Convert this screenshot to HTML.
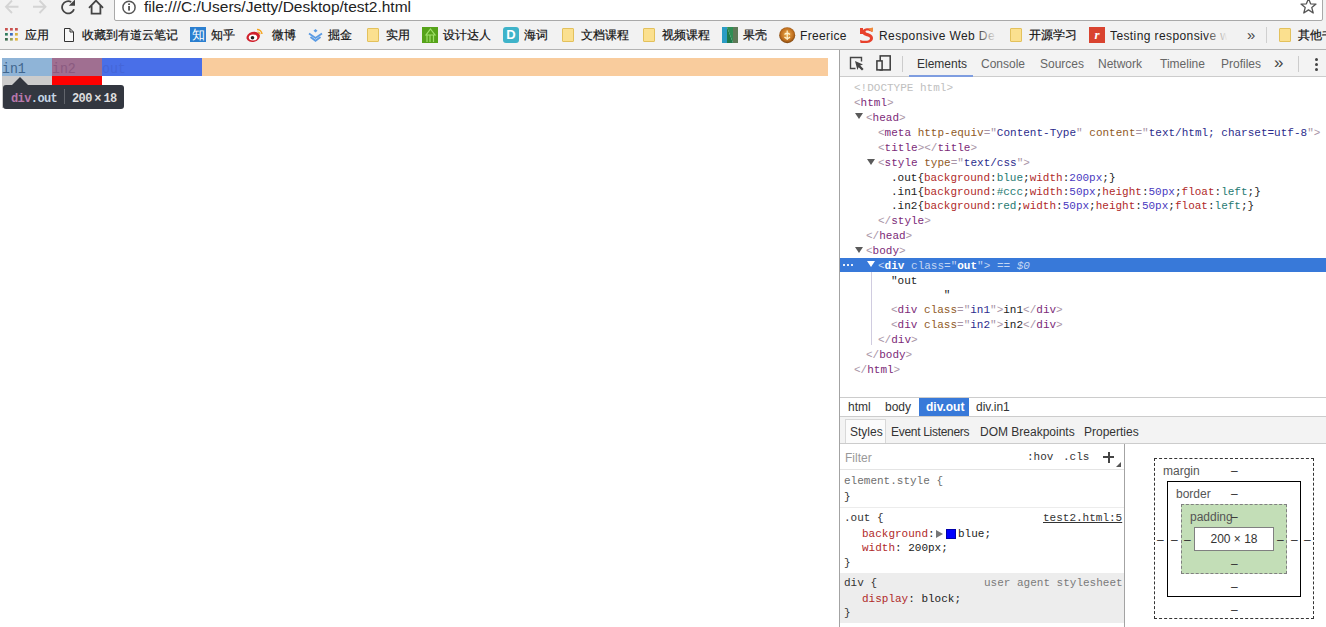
<!DOCTYPE html>
<html><head><meta charset="utf-8">
<style>
*{box-sizing:border-box}
html,body{margin:0;padding:0}
body{width:1326px;height:627px;position:relative;overflow:hidden;background:#fff;font-family:"Liberation Sans",sans-serif;font-size:12px;color:#222}
.a{position:absolute}
.t{position:absolute;white-space:pre;line-height:14px}
.m{font-family:"Liberation Mono",monospace;font-size:11px}
/* elements colors */
.tg{color:#7c2a78}.br{color:#a894a6}.an{color:#8f5a26}.av{color:#2c2c8c}
.bm{font-size:12px;line-height:14px;color:#111;-webkit-text-stroke:0.2px #111}
.fold{top:28px;width:12px;height:14px;background:#fbe08f;border:1px solid #e3c15c;border-radius:1px}
.pg{top:61px;font:15px/18px "Liberation Mono",monospace;transform:scaleX(0.88);transform-origin:0 0}
.cp{color:#b02a2a}.ca{color:#1f7a72}.cn{color:#4a3ac0}
</style></head><body>


<!-- ===== top toolbar ===== -->
<div class="a" style="left:0;top:0;width:1326px;height:49px;background:#f2f2f2"></div>
<!-- nav icons -->
<svg class="a" style="left:0;top:0" width="115" height="20" viewBox="0 0 115 20">
 <g fill="none" stroke="#d4d4d4" stroke-width="1.9">
  <path d="M18.5 6.8H6.5M12 0.5L6 6.8L12 13"/>
  <path d="M33 6.8H45M39.5 0.5L45.5 6.8L39.5 13"/>
 </g>
 <g fill="none" stroke="#444" stroke-width="1.8">
  <path d="M74 9.2A6.1 6.1 0 1 1 71.2 2"/>
  <path d="M89 7.8L96 0.6L103 7.8"/>
  <path d="M91.6 5.8V13.6H100.4V5.8"/>
 </g>
 <path d="M75 -0.5V5.8H68.8Z" fill="#444"/>
</svg>
<div class="a" style="left:114px;top:-3px;width:1209px;height:24px;background:#fff;border:1px solid #a9a9a9;border-radius:2px"></div>
<svg class="a" style="left:115px;top:0" width="30" height="19" viewBox="0 0 30 19">
 <circle cx="14" cy="7.4" r="6.1" fill="none" stroke="#555" stroke-width="1.5"/>
 <rect x="13.2" y="6" width="1.7" height="4.6" fill="#444"/>
 <rect x="13.2" y="3.4" width="1.7" height="1.6" fill="#444"/>
</svg>
<div class="t" style="left:144px;top:-2px;font-size:15.5px;line-height:18px;color:#222">file:///C:/Users/Jetty/Desktop/test2.html</div>
<svg class="a" style="left:1298px;top:0" width="22" height="16" viewBox="0 0 22 16">
 <path d="M10.5 -1.5L12.6 3.8L18 4.1L13.8 7.6L15.2 13L10.5 9.9L5.8 13L7.2 7.6L3 4.1L8.4 3.8Z" fill="none" stroke="#555" stroke-width="1.3" stroke-linejoin="round"/>
</svg>

<!-- bookmarks -->
<svg class="a" style="left:0;top:22px" width="80" height="26" viewBox="0 0 80 26">
 <rect x="5" y="6" width="2.8" height="2.6" fill="#c9524f"/><rect x="10" y="6" width="2.8" height="2.6" fill="#c9524f"/><rect x="15" y="6" width="2.8" height="2.6" fill="#c9524f"/>
 <rect x="5" y="11" width="2.8" height="2.6" fill="#2f7d5e"/><rect x="10" y="11" width="2.8" height="2.6" fill="#3b6cc0"/><rect x="15" y="11" width="2.8" height="2.6" fill="#d9b23e"/>
 <rect x="5" y="16" width="2.8" height="2.6" fill="#3d6b4e"/><rect x="10" y="16" width="2.8" height="2.6" fill="#9aa45a"/><rect x="15" y="16" width="2.8" height="2.6" fill="#e0b43c"/>
 <path d="M64.5 6.5H70L73.5 10V19.5H64.5Z M70 6.5V10H73.5" fill="#f8f8f8" stroke="#333" stroke-width="1" stroke-linejoin="miter"/>
</svg>
<div class="t bm" style="left:25px;top:28px">应用</div>
<div class="t bm" style="left:82px;top:28px">收藏到有道云笔记</div>
<div class="a" style="left:190px;top:27px;width:16px;height:15px;background:#2b7fd0;color:#fff;font-size:13px;line-height:15px;text-align:center">知</div>
<div class="t bm" style="left:211px;top:28px">知乎</div>
<svg class="a" style="left:246px;top:27px" width="18" height="16" viewBox="0 0 18 16">
 <ellipse cx="7.2" cy="9.8" rx="6.8" ry="5" fill="#d0202c" transform="rotate(-15 7.2 9.8)"/>
 <ellipse cx="7" cy="10.5" rx="4.2" ry="3" fill="#fff"/>
 <circle cx="6.5" cy="10.8" r="1.8" fill="#222"/>
 <path d="M11 2.5A5 5 0 0 1 16 7" fill="none" stroke="#f5a623" stroke-width="1.5"/>
 <path d="M11.5 5A2.5 2.5 0 0 1 14 7.2" fill="none" stroke="#f5a623" stroke-width="1.2"/>
</svg>
<div class="t bm" style="left:272px;top:28px">微博</div>
<svg class="a" style="left:307px;top:27px" width="18" height="16" viewBox="0 0 18 16">
 <path d="M8.5 2L10.5 3.8L8.5 5.6L6.5 3.8Z" fill="#5a9be4"/>
 <path d="M2 6.5L8.5 11L15 6.5" fill="none" stroke="#5a9be4" stroke-width="1.8"/>
 <path d="M3.5 10L8.5 13.8L13.5 10" fill="none" stroke="#5a9be4" stroke-width="1.8"/>
</svg>
<div class="t bm" style="left:328px;top:28px">掘金</div>
<div class="a fold" style="left:367px"></div>
<div class="t bm" style="left:386px;top:28px">实用</div>
<svg class="a" style="left:422px;top:27px" width="16" height="16" viewBox="0 0 16 16"><rect width="16" height="16" fill="#56a31a"/><path d="M8.5 2L13 8H4Z M5 8V15M8 8V15M11.5 8V15" fill="none" stroke="#9fe06a" stroke-width="1.2"/></svg>
<div class="t bm" style="left:443px;top:28px">设计达人</div>
<div class="a" style="left:503px;top:27px;width:16px;height:16px;background:#3fb3c9;border-radius:3px;color:#fff;font-weight:bold;font-size:13px;line-height:16px;text-align:center">D</div>
<div class="t bm" style="left:524px;top:28px">海词</div>
<div class="a fold" style="left:562px"></div>
<div class="t bm" style="left:581px;top:28px">文档课程</div>
<div class="a fold" style="left:643px"></div>
<div class="t bm" style="left:662px;top:28px">视频课程</div>
<svg class="a" style="left:722px;top:27px" width="16" height="16" viewBox="0 0 16 16">
 <path d="M0 0H5V16H0Z" fill="#2a9cc4"/><path d="M5 0L11 16H5Z" fill="#1f7a4a"/><path d="M5 0H11V16Z" fill="#2f8f55"/><path d="M11 0H16V16H11Z" fill="#5f7a58"/>
</svg>
<div class="t bm" style="left:743px;top:28px">果壳</div>
<svg class="a" style="left:779px;top:27px" width="17" height="17" viewBox="0 0 17 17">
 <defs><radialGradient id="fr" cx="50%" cy="45%" r="55%"><stop offset="0" stop-color="#f0b050"/><stop offset="0.7" stop-color="#c07020"/><stop offset="1" stop-color="#7a4410"/></radialGradient></defs>
 <circle cx="8.2" cy="8.2" r="8" fill="url(#fr)"/><path d="M8.2 3.5V13M5.5 7.5Q8.2 5 11 7.5M5.5 10Q8.2 13 11 10" fill="none" stroke="#fff3d0" stroke-width="1.2"/>
</svg>
<div class="t bm" style="left:800px;top:29px;-webkit-text-stroke:0;color:#222;letter-spacing:0.35px">Freerice</div>
<svg class="a" style="left:858px;top:27px" width="16" height="16" viewBox="0 0 16 16">
 <path d="M2 1H5V7H2Z" fill="#e8412c"/><path d="M14 2C9 0 3 2 4.5 6.5C6 10 12 8.5 12 11.5C12 14 7 14.5 2 13L2.5 16H9C15 15.5 16.5 11 13.5 8C11 5.5 7.5 6.5 7.5 4.5C7.5 3 11 3 14 5Z" fill="#e8412c"/><path d="M10.5 1.5L15 0.5V5L12.5 3.8Z" fill="#f08a3c"/>
</svg>
<div class="t bm" style="left:879px;top:29px;-webkit-text-stroke:0;color:#222;width:116px;overflow:hidden;letter-spacing:0.4px">Responsive Web Design</div>
<div class="a" style="left:975px;top:26px;width:22px;height:18px;background:linear-gradient(to right,rgba(242,242,242,0),#f2f2f2)"></div>
<div class="a fold" style="left:1010px"></div>
<div class="t bm" style="left:1029px;top:28px">开源学习</div>
<div class="a" style="left:1089px;top:27px;width:16px;height:16px;background:#d9432f;color:#fff;font:italic bold 13px/16px 'Liberation Serif',serif;text-align:center">r</div>
<div class="t bm" style="left:1110px;top:29px;-webkit-text-stroke:0;color:#222;width:118px;overflow:hidden;letter-spacing:0.4px">Testing responsive web</div>
<div class="a" style="left:1205px;top:26px;width:25px;height:18px;background:linear-gradient(to right,rgba(242,242,242,0),#f2f2f2 90%)"></div>
<div class="t" style="left:1247px;top:26px;font-size:15px;line-height:17px;color:#444">&#187;</div>
<div class="a" style="left:1266px;top:27px;width:1px;height:16px;background:#d0d0d0"></div>
<div class="a fold" style="left:1279px"></div>
<div class="t bm" style="left:1298px;top:28px">其他书签</div>
<div class="a" style="left:0;top:49px;width:1326px;height:1px;background:#b3b3b3"></div>


<!-- ===== page ===== -->
<div class="a" style="left:2px;top:58px;width:826px;height:18px;background:#f9cc9d"></div>
<div class="a" style="left:102px;top:58px;width:100px;height:18px;background:#496fe8"></div>
<div class="a" style="left:2px;top:58px;width:50px;height:50px;background:#ccc"></div>
<div class="a" style="left:52px;top:58px;width:50px;height:50px;background:#f00"></div>
<div class="a" style="left:2px;top:58px;width:50px;height:18px;background:#8fb4d7"></div>
<div class="a" style="left:52px;top:58px;width:50px;height:18px;background:#a06f91"></div>
<div class="t pg" style="left:2px;color:#40668e">in1</div>
<div class="t pg" style="left:52px;color:#8a5a80">in2</div>
<div class="t pg" style="left:102px;color:#4566d8">out</div>
<!-- tooltip -->
<div class="a" style="left:3px;top:85px;width:121px;height:24px;background:#333740;border-radius:3px"></div>
<div class="a" style="left:12px;top:77px;width:0;height:0;border-left:8px solid transparent;border-right:8px solid transparent;border-bottom:8px solid #333740"></div>
<div class="t" style="left:11px;top:92px;font:bold 12px/14px 'Liberation Mono',monospace;letter-spacing:-0.6px"><span style="color:#b878ac">div</span><span style="color:#c4d4e4">.out</span></div>
<div class="a" style="left:64px;top:89px;width:1px;height:15px;background:#62656c"></div>
<div class="t" style="left:72px;top:92px;font:bold 12px/14px 'Liberation Mono',monospace;letter-spacing:-0.6px;color:#dedede">200<span style="margin:0 2.5px">&#215;</span>18</div>

<!-- ===== devtools ===== -->
<div class="a" style="left:839px;top:50px;width:1px;height:577px;background:#a3a3a3"></div>
<!-- toolbar -->
<div class="a" style="left:840px;top:50px;width:486px;height:27px;background:#f3f3f3;border-bottom:1px solid #ccc"></div>
<svg class="a" style="left:840px;top:50px" width="60" height="26" viewBox="0 0 60 26">
 <path d="M15.5 18.5H10.5V7.5H21.5V11.5" fill="none" stroke="#444" stroke-width="1.4"/>
 <path d="M15 11L23 14.6L20.2 15.6L23.6 19L22 20.6L18.6 17.2L17.4 20Z" fill="#444"/>
 <rect x="40.2" y="5.9" width="10" height="14" fill="none" stroke="#3a3a3a" stroke-width="1.5"/>
 <rect x="36.9" y="10.9" width="5.2" height="9" fill="#f3f3f3" stroke="#3a3a3a" stroke-width="1.5"/>
</svg>
<div class="a" style="left:902px;top:56px;width:1px;height:16px;background:#ccc"></div>
<div class="t" style="left:917px;top:57px;color:#333">Elements</div>
<div class="a" style="left:909px;top:75px;width:64px;height:2px;background:#7e9de0"></div>
<div class="t" style="left:981px;top:57px;color:#666">Console</div>
<div class="t" style="left:1040px;top:57px;color:#666">Sources</div>
<div class="t" style="left:1098px;top:57px;color:#666">Network</div>
<div class="t" style="left:1160px;top:57px;color:#666">Timeline</div>
<div class="t" style="left:1221px;top:57px;color:#666">Profiles</div>
<div class="t" style="left:1274px;top:54px;font-size:17px;line-height:17px;color:#444">&#187;</div>
<div class="a" style="left:1298px;top:56px;width:1px;height:16px;background:#ccc"></div>
<div class="a" style="left:1315px;top:58px;width:3px;height:3px;background:#444;border-radius:2px"></div>
<div class="a" style="left:1315px;top:63px;width:3px;height:3px;background:#444;border-radius:2px"></div>
<div class="a" style="left:1315px;top:68px;width:3px;height:3px;background:#444;border-radius:2px"></div>

<!-- elements tree -->
<div class="a m" style="left:840px;top:258px;width:486px;height:14px;background:#3879d9"></div>
<div class="a" style="left:871px;top:272px;width:1px;height:73px;background:#d0cce0"></div>
<div class="t m" style="left:854px;top:81px;color:#c0c0c0">&lt;!DOCTYPE html&gt;</div>
<div class="t m" style="left:854px;top:96px"><span class="br">&lt;</span><span class="tg">html</span><span class="br">&gt;</span></div>
<div class="a" style="left:855px;top:113px;width:0;height:0;border-left:4px solid transparent;border-right:4px solid transparent;border-top:6.5px solid #5a5a5a"></div>
<div class="t m" style="left:866px;top:111px"><span class="br">&lt;</span><span class="tg">head</span><span class="br">&gt;</span></div>
<div class="t m" style="left:878px;top:126px"><span class="br">&lt;</span><span class="tg">meta</span> <span class="an">http-equiv</span><span class="br">="</span><span class="av">Content-Type</span><span class="br">"</span> <span class="an">content</span><span class="br">="</span><span class="av">text/html; charset=utf-8</span><span class="br">"&gt;</span></div>
<div class="t m" style="left:878px;top:141px"><span class="br">&lt;</span><span class="tg">title</span><span class="br">&gt;&lt;/</span><span class="tg">title</span><span class="br">&gt;</span></div>
<div class="a" style="left:867px;top:158.5px;width:0;height:0;border-left:4px solid transparent;border-right:4px solid transparent;border-top:6.5px solid #5a5a5a"></div>
<div class="t m" style="left:878px;top:156px"><span class="br">&lt;</span><span class="tg">style</span> <span class="an">type</span><span class="br">="</span><span class="av">text/css</span><span class="br">"&gt;</span></div>
<div class="t m" style="left:891px;top:171px">.out{<span class="cp">background</span>:<span class="ca">blue</span>;<span class="cp">width</span>:<span class="cn">200px</span>;}</div>
<div class="t m" style="left:891px;top:185px">.in1{<span class="cp">background</span>:<span class="ca">#ccc</span>;<span class="cp">width</span>:<span class="cn">50px</span>;<span class="cp">height</span>:<span class="cn">50px</span>;<span class="cp">float</span>:<span class="ca">left</span>;}</div>
<div class="t m" style="left:891px;top:199px">.in2{<span class="cp">background</span>:<span class="ca">red</span>;<span class="cp">width</span>:<span class="cn">50px</span>;<span class="cp">height</span>:<span class="cn">50px</span>;<span class="cp">float</span>:<span class="ca">left</span>;}</div>
<div class="t m" style="left:878px;top:214px"><span class="br">&lt;/</span><span class="tg">style</span><span class="br">&gt;</span></div>
<div class="t m" style="left:866px;top:229px"><span class="br">&lt;/</span><span class="tg">head</span><span class="br">&gt;</span></div>
<div class="a" style="left:855px;top:246.5px;width:0;height:0;border-left:4px solid transparent;border-right:4px solid transparent;border-top:6.5px solid #5a5a5a"></div>
<div class="t m" style="left:866px;top:244px"><span class="br">&lt;</span><span class="tg">body</span><span class="br">&gt;</span></div>
<div class="a" style="left:843px;top:264px;width:2px;height:2px;background:#e8eefa"></div><div class="a" style="left:847px;top:264px;width:2px;height:2px;background:#e8eefa"></div><div class="a" style="left:851px;top:264px;width:2px;height:2px;background:#e8eefa"></div>
<div class="a" style="left:867px;top:261px;width:0;height:0;border-left:4px solid transparent;border-right:4px solid transparent;border-top:6.5px solid #fff"></div>
<div class="t m" style="left:878px;top:259px;color:#fff"><span style="color:#c3d6f3">&lt;</span><b>div</b> <span style="color:#c3d6f3">class="</span><b>out</b><span style="color:#c3d6f3">"&gt;</span> <span style="color:#c3d6f3">==</span> <i style="color:#c3d6f3">$0</i></div>
<div class="t m" style="left:891px;top:274px;color:#222">"out</div>
<div class="t m" style="left:891px;top:288px;color:#222">        "</div>
<div class="t m" style="left:891px;top:303px"><span class="br">&lt;</span><span class="tg">div</span> <span class="an">class</span><span class="br">="</span><span class="av">in1</span><span class="br">"&gt;</span>in1<span class="br">&lt;/</span><span class="tg">div</span><span class="br">&gt;</span></div>
<div class="t m" style="left:891px;top:318px"><span class="br">&lt;</span><span class="tg">div</span> <span class="an">class</span><span class="br">="</span><span class="av">in2</span><span class="br">"&gt;</span>in2<span class="br">&lt;/</span><span class="tg">div</span><span class="br">&gt;</span></div>
<div class="t m" style="left:878px;top:333px"><span class="br">&lt;/</span><span class="tg">div</span><span class="br">&gt;</span></div>
<div class="t m" style="left:866px;top:348px"><span class="br">&lt;/</span><span class="tg">body</span><span class="br">&gt;</span></div>
<div class="t m" style="left:854px;top:363px"><span class="br">&lt;/</span><span class="tg">html</span><span class="br">&gt;</span></div>

<!-- breadcrumbs -->
<div class="a" style="left:840px;top:397px;width:486px;height:20px;background:#fff;border-top:1px solid #ccc;border-bottom:1px solid #ccc"></div>
<div class="a" style="left:919px;top:398px;width:50px;height:18px;background:#3879d9"></div>
<div class="t" style="left:848px;top:400px;color:#333">html</div>
<div class="t" style="left:885px;top:400px;color:#333">body</div>
<div class="t" style="left:926px;top:400px;color:#fff;font-weight:bold">div.out</div>
<div class="t" style="left:976px;top:400px;color:#333">div.in1</div>

<!-- sidebar tabs -->
<div class="a" style="left:840px;top:417px;width:486px;height:27px;background:#f3f3f3;border-bottom:1px solid #ccc"></div>
<div class="a" style="left:845px;top:419px;width:41px;height:24px;background:#fbfbfb;border:1px solid #d8d8d8;border-bottom:none"></div>
<div class="t" style="left:850px;top:425px;color:#333">Styles</div>
<div class="t" style="left:891px;top:425px;color:#333;letter-spacing:-0.3px">Event Listeners</div>
<div class="t" style="left:980px;top:425px;color:#333">DOM Breakpoints</div>
<div class="t" style="left:1084px;top:425px;color:#333">Properties</div>

<!-- styles pane -->
<div class="a" style="left:1124px;top:444px;width:1px;height:183px;background:#a3a3a3"></div>
<div class="a" style="left:840px;top:469px;width:284px;height:1px;background:#e4e4e4"></div>
<div class="t" style="left:845px;top:451px;color:#999">Filter</div>
<div class="t m" style="left:1027px;top:450px;color:#333">:hov</div>
<div class="t m" style="left:1063px;top:450px;color:#333">.cls</div>
<div class="a" style="left:1103px;top:456px;width:11px;height:2px;background:#444"></div><div class="a" style="left:1107.5px;top:451.5px;width:2px;height:11px;background:#444"></div>
<div class="a" style="left:1116px;top:462px;width:0;height:0;border-left:5px solid transparent;border-bottom:5px solid #555"></div>

<div class="t m" style="left:844px;top:474px;color:#6e6e6e">element.style {</div>
<div class="t m" style="left:844px;top:490px;color:#333">}</div>
<div class="a" style="left:840px;top:507px;width:284px;height:1px;background:#ececec"></div>
<div class="t m" style="left:844px;top:511px;color:#333">.out {</div>
<div class="t m" style="left:1043px;top:511px;color:#333;text-decoration:underline">test2.html:5</div>
<div class="t m" style="left:862px;top:527px"><span class="cp">background</span>:</div>
<div class="a" style="left:936px;top:530px;width:0;height:0;border-top:4px solid transparent;border-bottom:4px solid transparent;border-left:7px solid #777"></div>
<div class="a" style="left:946px;top:529px;width:10px;height:10px;background:#00f;border:1px solid #0000aa"></div>
<div class="t m" style="left:958px;top:527px;color:#222">blue;</div>
<div class="t m" style="left:862px;top:541px"><span class="cp">width</span>: 200px;</div>
<div class="t m" style="left:844px;top:556px;color:#333">}</div>
<div class="a" style="left:840px;top:573px;width:284px;height:50px;background:#ededed"></div>
<div class="t m" style="left:844px;top:576px;color:#333">div {</div>
<div class="t m" style="left:984px;top:576px;color:#7a7a7a">user agent stylesheet</div>
<div class="t m" style="left:862px;top:592px"><span class="cp">display</span>: block;</div>
<div class="t m" style="left:844px;top:606px;color:#333">}</div>

<!-- box model -->
<div class="a" style="left:1154px;top:458px;width:160px;height:161px;border:1px dashed #333"></div>
<div class="t" style="left:1163px;top:464px;color:#555">margin</div>
<div class="t" style="left:1231px;top:464px;color:#333">&#8211;</div>
<div class="a" style="left:1167px;top:481px;width:134px;height:116px;border:1px solid #000"></div>
<div class="t" style="left:1176px;top:487px;color:#555">border</div>
<div class="t" style="left:1231px;top:487px;color:#333">&#8211;</div>
<div class="a" style="left:1181px;top:504px;width:106px;height:70px;background:#c3deb7;border:1px dashed #808080"></div>
<div class="t" style="left:1190px;top:510px;color:#555">padding</div>
<div class="t" style="left:1231px;top:510px;color:#333">&#8211;</div>
<div class="a" style="left:1194px;top:527px;width:80px;height:24px;background:#fff;border:1px solid #808080"></div>
<div class="t" style="left:1194px;top:532px;width:80px;text-align:center;color:#333">200 &#215; 18</div>
<div class="t" style="left:1231px;top:557px;color:#333">&#8211;</div>
<div class="t" style="left:1231px;top:580px;color:#333">&#8211;</div>
<div class="t" style="left:1231px;top:603px;color:#333">&#8211;</div>
<div class="t" style="left:1157px;top:533px;color:#333">&#8211;</div>
<div class="t" style="left:1171px;top:533px;color:#333">&#8211;</div>
<div class="t" style="left:1184px;top:533px;color:#333">&#8211;</div>
<div class="t" style="left:1277px;top:533px;color:#333">&#8211;</div>
<div class="t" style="left:1291px;top:533px;color:#333">&#8211;</div>
<div class="t" style="left:1304px;top:533px;color:#333">&#8211;</div>

</body></html>
